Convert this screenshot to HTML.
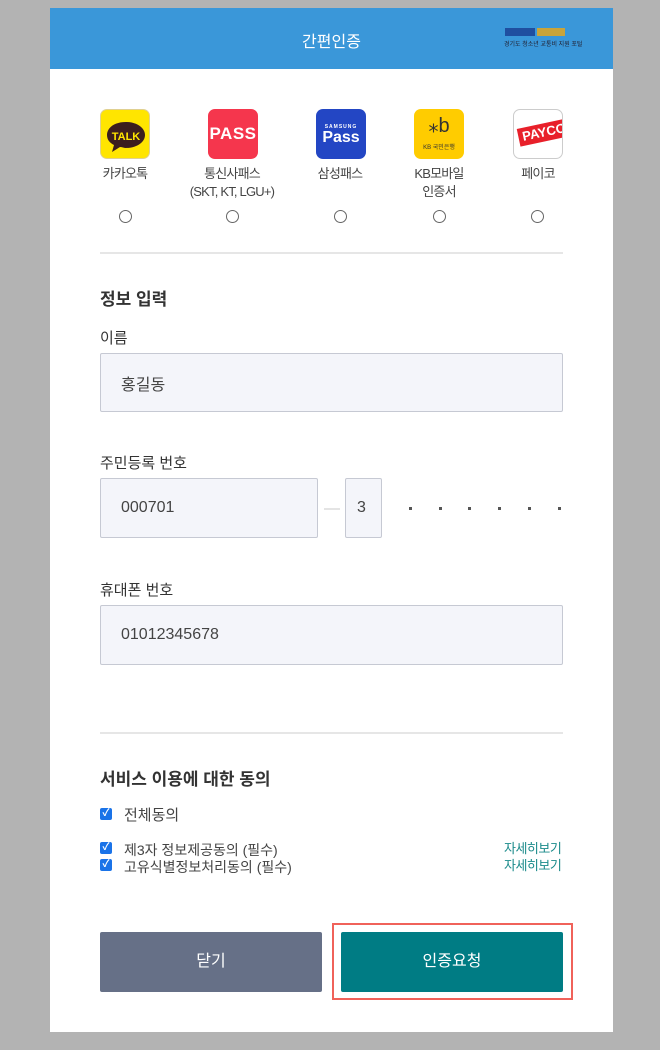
<!DOCTYPE html>
<html><head><meta charset="utf-8"><style>
*{margin:0;padding:0;box-sizing:border-box}
body{width:660px;height:1050px;background:#b3b3b3;font-family:"Liberation Sans","Noto Sans CJK KR",sans-serif;position:relative;overflow:hidden;color:#333}
.card{position:absolute;left:50px;top:8px;width:563px;height:1024px;background:#fff}
.a{position:absolute}
.hdr{left:50px;top:8px;width:563px;height:61px;background:#3a97d9}
.ic{width:50px;height:50px;border-radius:7px;top:109px;overflow:hidden}
.lb{font-size:13px;color:#444;text-align:center;width:100px;top:165px;line-height:18px;letter-spacing:-0.8px}
.rd{width:13px;height:13px;border:1px solid #666;border-radius:50%;top:210px;background:#fff}
.div{left:100px;width:463px;height:2px;background:#e6e6e6}
.h{font-size:17px;font-weight:bold;color:#333;left:100px}
.l{font-size:15px;color:#333;left:100px}
.in{background:#f4f5fa;border:1px solid #c6c9d3;border-radius:2px;font-size:16px;color:#444;padding-left:20px;display:flex;align-items:center}
.cb{width:12px;height:12px;background:#1a73e8;border-radius:2px;left:100px;color:#fff;font-size:10px;line-height:12px;text-align:center;font-weight:bold}
.t{font-size:14px;color:#444;left:124px}
.more{font-size:13px;color:#1a8a8a;left:504px;letter-spacing:-0.5px}
.dot{width:3px;height:3px;background:#555;top:507px}
</style></head><body>
<div class="card"></div>
<div class="a hdr"></div>
<div class="a" style="left:50px;top:28px;width:563px;text-align:center;color:#fff;font-size:16px">간편인증</div>
<div class="a" style="left:505px;top:28px;width:30px;height:8px;background:#1f4fa0"></div>
<div class="a" style="left:537px;top:28px;width:28px;height:8px;background:#c9a43a"></div>
<div class="a" style="left:504px;top:39px;font-size:6px;color:#223;white-space:nowrap">경기도 청소년 교통비 지원 포털</div>

<div class="a ic" style="left:100px;background:#ffe500;border:1px solid #e0d090">
<svg width="50" height="50"><path d="M25 12c-12 0-19 6-19 13 0 5 3 8 7 10l-2 7 8-5c2 0 4 1 6 1 11 0 19-6 19-13S36 12 25 12z" fill="#3c1e1e"/><text x="25" y="30" text-anchor="middle" font-size="11" font-weight="bold" fill="#ffe500" font-family="Liberation Sans">TALK</text></svg></div>
<div class="a ic" style="left:208px;background:#f5364d"><div style="color:#fff;font-weight:bold;font-size:17px;text-align:center;line-height:50px;letter-spacing:0.5px">PASS</div></div>
<div class="a ic" style="left:316px;background:#2346c4"><div style="color:#fff;font-size:5px;text-align:center;margin-top:15px;font-weight:bold;letter-spacing:1px">SAMSUNG</div><div style="color:#fff;font-size:16px;text-align:center;font-weight:bold;line-height:16px">Pass</div></div>
<div class="a ic" style="left:414px;background:#ffcc00"><div style="color:#333;font-size:20px;text-align:center;margin-top:4px">⁎b</div><div style="color:#333;font-size:6px;text-align:center;margin-top:4px">KB 국민은행</div></div>
<div class="a ic" style="left:513px;background:#fff;border:1px solid #ccc"><div style="position:absolute;left:4px;top:13px;width:56px;height:18px;background:#e8202a;transform:rotate(-12deg);color:#fff;font-weight:bold;font-size:13px;line-height:18px;padding-left:4px">PAYCO</div></div>

<div class="a lb" style="left:75px">카카오톡</div>
<div class="a lb" style="left:182px">통신사패스<br>(SKT, KT, LGU+)</div>
<div class="a lb" style="left:290px">삼성패스</div>
<div class="a lb" style="left:389px">KB모바일<br>인증서</div>
<div class="a lb" style="left:488px">페이코</div>
<div class="a rd" style="left:119px"></div>
<div class="a rd" style="left:226px"></div>
<div class="a rd" style="left:334px"></div>
<div class="a rd" style="left:433px"></div>
<div class="a rd" style="left:531px"></div>

<div class="a div" style="top:252px"></div>
<div class="a h" style="top:285px">정보 입력</div>
<div class="a l" style="top:327px">이름</div>
<div class="a in" style="left:100px;top:353px;width:463px;height:59px">홍길동</div>
<div class="a l" style="top:452px">주민등록 번호</div>
<div class="a in" style="left:100px;top:478px;width:218px;height:60px">000701</div>
<div class="a" style="left:324px;top:508px;width:16px;height:2px;background:#e4e4e4"></div>
<div class="a in" style="left:345px;top:478px;width:37px;height:60px;padding-left:11px">3</div>
<div class="a dot" style="left:409px"></div><div class="a dot" style="left:439px"></div><div class="a dot" style="left:468px"></div><div class="a dot" style="left:498px"></div><div class="a dot" style="left:528px"></div><div class="a dot" style="left:558px"></div>
<div class="a l" style="top:579px">휴대폰 번호</div>
<div class="a in" style="left:100px;top:605px;width:463px;height:60px">01012345678</div>

<div class="a div" style="top:732px"></div>
<div class="a h" style="top:765px">서비스 이용에 대한 동의</div>
<div class="a cb" style="top:808px">✓</div><div class="a t" style="top:804px;font-size:15px">전체동의</div>
<div class="a cb" style="top:842px">✓</div><div class="a t" style="top:840px">제3자 정보제공동의 (필수)</div>
<div class="a cb" style="top:859px">✓</div><div class="a t" style="top:857px">고유식별정보처리동의 (필수)</div>
<div class="a more" style="top:838px">자세히보기</div>
<div class="a more" style="top:855px">자세히보기</div>

<div class="a" style="left:100px;top:932px;width:222px;height:60px;background:#667087;border-radius:2px;color:#fff;font-size:16px;text-align:center;line-height:60px">닫기</div>
<div class="a" style="left:332px;top:923px;width:241px;height:77px;border:2px solid #f0625a"></div>
<div class="a" style="left:341px;top:932px;width:222px;height:60px;background:#007c84;border-radius:2px;color:#fff;font-size:16px;text-align:center;line-height:60px">인증요청</div>
</body></html>
